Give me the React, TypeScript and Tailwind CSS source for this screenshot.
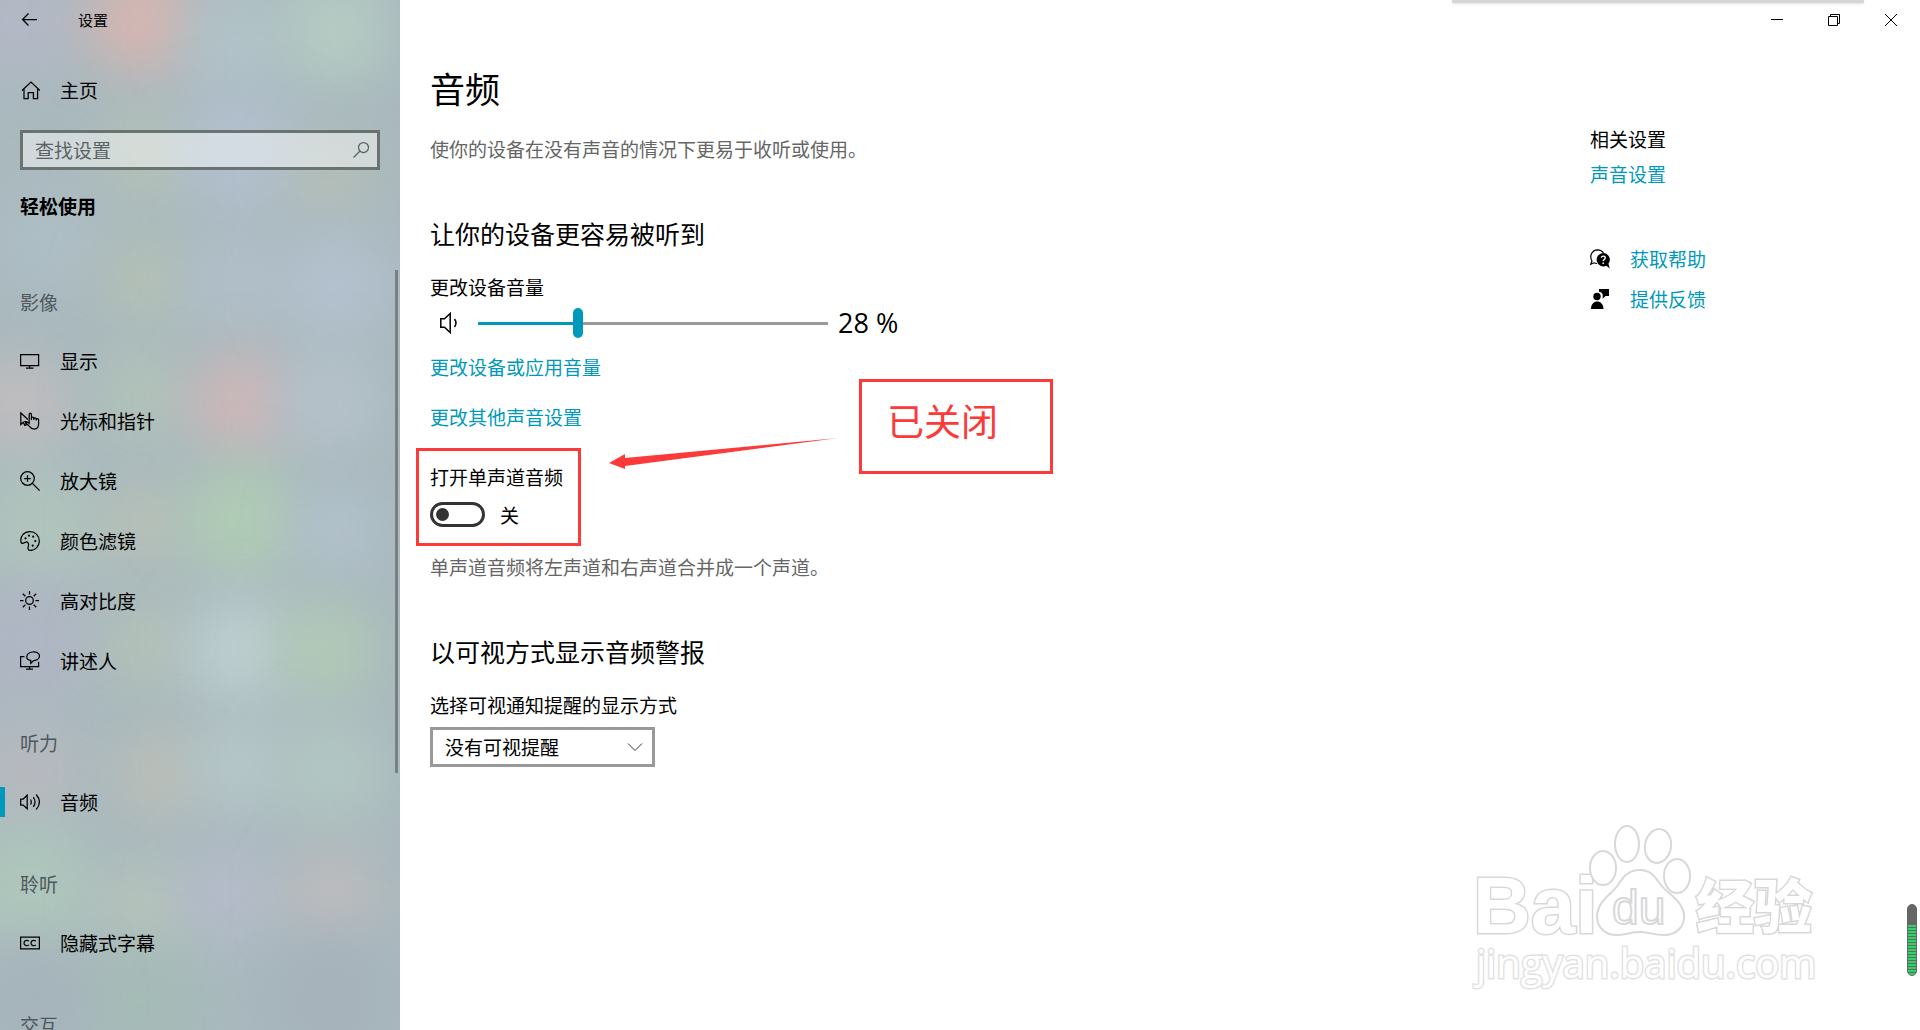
import { useState } from 'react'
import type { ReactNode } from 'react'

type Blob = { x: number; y: number; r: number; color: string }

type NavEntry = { id: string; label: string; icon: ReactNode }

type NavGroup = { title: string; items: NavEntry[] }

// soft spots of colour behind the navigation pane
const blobs: Blob[] = [
  { x: 20, y: 20, r: 60, color: '#b4b8c6' },
  { x: 142, y: 20, r: 54, color: '#dab5b0' },
  { x: 235, y: 40, r: 50, color: '#b3c4ca' },
  { x: 335, y: 30, r: 55, color: '#b6cdc3' },
  { x: 145, y: 155, r: 45, color: '#b6c2b4' },
  { x: 240, y: 150, r: 60, color: '#b2c1d0' },
  { x: 330, y: 175, r: 40, color: '#b7bfb5' },
  { x: 50, y: 240, r: 50, color: '#afbfc6' },
  { x: 145, y: 280, r: 40, color: '#b6c3b2' },
  { x: 235, y: 280, r: 50, color: '#b2c0ca' },
  { x: 335, y: 285, r: 55, color: '#b4c2d0' },
  { x: 20, y: 405, r: 50, color: '#c3bdbf' },
  { x: 140, y: 395, r: 45, color: '#b3c4b8' },
  { x: 240, y: 403, r: 50, color: '#d2b7b8' },
  { x: 330, y: 400, r: 50, color: '#b7c3cc' },
  { x: 40, y: 530, r: 60, color: '#b1c6bc' },
  { x: 142, y: 525, r: 42, color: '#b9c1b5' },
  { x: 240, y: 520, r: 58, color: '#b0cdb4' },
  { x: 338, y: 530, r: 42, color: '#b4c3cf' },
  { x: 30, y: 640, r: 65, color: '#b0b6c4' },
  { x: 145, y: 645, r: 42, color: '#b5c3b5' },
  { x: 240, y: 650, r: 52, color: '#bfd1d3' },
  { x: 325, y: 650, r: 52, color: '#b2cbb6' },
  { x: 30, y: 775, r: 50, color: '#b9b9bf' },
  { x: 158, y: 775, r: 44, color: '#bdbfb6' },
  { x: 240, y: 765, r: 48, color: '#b7c9ca' },
  { x: 330, y: 770, r: 55, color: '#b3c8c2' },
  { x: 30, y: 890, r: 65, color: '#afc8bb' },
  { x: 145, y: 910, r: 44, color: '#b9c6b9' },
  { x: 230, y: 895, r: 52, color: '#b5bcca' },
  { x: 332, y: 895, r: 45, color: '#c1bcbe' },
  { x: 140, y: 1000, r: 60, color: '#a5bcb6' },
  { x: 30, y: 1000, r: 60, color: '#a6b3bb' },
  { x: 330, y: 1000, r: 70, color: '#a6b2bb' },
]

function Icon({ children }: { children: ReactNode }) {
  return (
    <svg
      className="h-5 w-5 shrink-0"
      viewBox="0 0 20 20"
      fill="none"
      stroke="currentColor"
      strokeWidth="1.25"
      aria-hidden
    >
      {children}
    </svg>
  )
}

const groups: NavGroup[] = [
  {
    title: '影像',
    items: [
      {
        id: 'display',
        label: '显示',
        icon: (
          <Icon>
            <path d="M.6 3.6h18v11H.6zM9.6 14.6V17M6 17h7.5" />
          </Icon>
        ),
      },
      {
        id: 'cursor',
        label: '光标和指针',
        icon: (
          <Icon>
            <path d="M8 8.5.8 2v11.5l2.4-2.3 1.6 3.2 1.6-.8-1.4-3H7" />
            <path d="M9.2 10.5V3.2a1.1 1.1 0 0 1 2.2 0v4.6M11.4 9V7.4a1.1 1.1 0 0 1 2.4 0V9M13.8 9V8a1.1 1.1 0 0 1 2.4 0v1.5M16.2 9.5v-.7a1.1 1.1 0 0 1 2.4 0V13c0 3.2-2 5-4.4 5-2.4 0-3.7-1-4.7-2.6L6.3 12.5c-.6-1 .6-2 1.5-1.2l1.4 1.2v-3" />
          </Icon>
        ),
      },
      {
        id: 'magnifier',
        label: '放大镜',
        icon: (
          <Icon>
            <circle cx="7.5" cy="7.5" r="6.8" />
            <path d="m12.4 12.4 7.2 7.2M7.5 4.2v6.6M4.2 7.5h6.6" />
          </Icon>
        ),
      },
      {
        id: 'filter',
        label: '颜色滤镜',
        icon: (
          <Icon>
            <path d="M1 11C-.2 5 4.3.7 10 .7c5.3 0 9.3 4 9.3 9.3s-4 9.4-8.6 9.4c-3.7 0-2.7-2.9-2.2-4.9.5-2.1-.8-4-2.6-3.4-1.8.6-4.3 2.6-4.9-.1Z" />
            <g fill="currentColor" stroke="none">
              <circle cx="5.5" cy="7.3" r="1.1" />
              <circle cx="9" cy="4.7" r="1.1" />
              <circle cx="13.2" cy="5.7" r="1.1" />
              <circle cx="15.3" cy="10" r="1.1" />
              <circle cx="12.7" cy="14.7" r="1.1" />
            </g>
          </Icon>
        ),
      },
      {
        id: 'contrast',
        label: '高对比度',
        icon: (
          <Icon>
            <circle cx="9.5" cy="9.5" r="3.8" />
            <path d="M9.5 0v3.5M9.5 15.5V19M0 9.5h3.5M15.5 9.5H19M2.8 2.8l2.5 2.5M13.7 13.7l2.5 2.5M16.2 2.8l-2.5 2.5M5.3 13.7l-2.5 2.5" />
          </Icon>
        ),
      },
      {
        id: 'narrator',
        label: '讲述人',
        icon: (
          <Icon>
            <path d="M4.5 5.6H.6v10h18v-4.8M9.6 15.6V18M6 18h7" />
            <path d="M10.7 9.4C5 8.500 5.500 2 12.500 1c4.700-.5 7 1.600 7 4s-2.400 4.400-5.800 4.600l-3 2.700Z" />
          </Icon>
        ),
      },
    ],
  },
  {
    title: '听力',
    items: [
      {
        id: 'audio',
        label: '音频',
        icon: (
          <Icon>
            <path d="M.7 7v6h2.5l4 3.8V3.2L3.2 7ZM10.5 7.5c1 1.5 1 3.5 0 5M13.3 5.2c2.2 3 2.2 6.6 0 9.6M16.2 2.5c4 4.7 4 10.3 0 15" />
          </Icon>
        ),
      },
    ],
  },
  {
    title: '聆听',
    items: [
      {
        id: 'captions',
        label: '隐藏式字幕',
        icon: (
          <Icon>
            <path d="M.6 4.1h18.8v11.8H.6zM9 8c-2.5-1.3-5-.5-5 2s2.5 3.3 5 2M16 8c-2.5-1.3-5-.5-5 2s2.5 3.3 5 2" />
          </Icon>
        ),
      },
    ],
  },
  { title: '交互', items: [] },
]

const linkClass = 'block w-fit text-[19px] leading-6 text-[#0099bc] hover:text-gray-500'

function Sidebar() {
  const [active, setActive] = useState('audio')

  return (
    <aside className="relative h-full w-[400px] shrink-0 overflow-hidden bg-[#a9b9be]">
      <svg className="absolute inset-0 h-full w-full" aria-hidden>
        <defs>
          <filter id="soft" x="-100%" y="-100%" width="300%" height="300%">
            <feGaussianBlur stdDeviation="26" />
          </filter>
        </defs>
        <g opacity="0.9">
          {blobs.map((b) => (
            <circle key={`${b.x}-${b.y}`} cx={b.x} cy={b.y} r={b.r} fill={b.color} filter="url(#soft)" />
          ))}
        </g>
      </svg>

      <div className="relative">
        <div className="flex h-10 items-center gap-[38px] px-5">
          <button type="button" aria-label="返回">
            <svg className="h-5 w-5" viewBox="0 0 20 20" fill="none" stroke="currentColor" strokeWidth="1.25" aria-hidden>
              <path d="M17 9.5H2.5M8.5 3.500l-6 6 6 6" />
            </svg>
          </button>
          <span className="text-[15px]">设置</span>
        </div>

        <a href="#home" className="mt-5 flex h-[60px] items-center gap-5 px-5 text-[19px]">
          <svg className="h-5 w-5" viewBox="0 0 20 20" fill="none" stroke="currentColor" strokeWidth="1.25" aria-hidden>
            <path d="m2 10.5 9-8.500 9 8.500M4 9v9.500h4.200v-6h5.200v6h4.200V9" />
          </svg>
          主页
        </a>

        <div className="mx-5 mt-[10px] flex h-10 items-center border-3 border-[#6a7372] bg-white/45 pr-[6px] pl-3">
          <input
            type="text"
            aria-label="查找设置"
            placeholder="查找设置"
            className="min-w-0 flex-1 bg-transparent text-[19px] leading-6 outline-none placeholder:text-[#5b6264]"
          />
          <svg className="h-5 w-5 text-[#5b6264]" viewBox="0 0 20 20" fill="none" stroke="currentColor" strokeWidth="1.25" aria-hidden>
            <circle cx="12.5" cy="7.5" r="5" />
            <path d="m9 11-6.5 6.5" />
          </svg>
        </div>

        <h2 className="mt-6 px-5 text-[19px] leading-6 font-bold">轻松使用</h2>

        <nav className="mt-8" aria-label="轻松使用">
          {groups.map((group) => (
            <section key={group.title}>
              <h3 className="px-5 pt-10 pb-[17px] text-[19px] leading-6 text-[#4f585b]">{group.title}</h3>
              <ul>
                {group.items.map((item) => (
                  <li key={item.id} className="flex h-[60px] items-center">
                    <button
                      type="button"
                      className="flex h-[30px] w-full items-center text-[19px]"
                      aria-current={active === item.id ? 'page' : undefined}
                      onClick={() => setActive(item.id)}
                    >
                      <span className={`mr-[15px] h-full w-[5px] ${active === item.id ? 'bg-[#0099bc]' : ''}`} />
                      {item.icon}
                      <span className="ml-5">{item.label}</span>
                    </button>
                  </li>
                ))}
              </ul>
            </section>
          ))}
        </nav>
      </div>

      <div className="absolute top-[270px] right-[2px] h-[503px] w-[3px] bg-[#7b7f81]" />
    </aside>
  )
}

function WindowControls() {
  const button = 'flex h-10 w-[57px] items-center justify-center hover:bg-gray-200'

  return (
    <div className="flex justify-end pr-px">
      <button type="button" aria-label="最小化" className={button}>
        <svg className="h-3 w-3" viewBox="0 0 12 12" stroke="currentColor" aria-hidden>
          <path d="M0 5.5h12" />
        </svg>
      </button>
      <button type="button" aria-label="还原" className={button}>
        <svg className="h-3 w-3" viewBox="0 0 12 12" fill="none" stroke="currentColor" aria-hidden>
          <path d="M.5 2.5h9v9h-9zM2.5 2.5v-2h9v9h-2" />
        </svg>
      </button>
      <button type="button" aria-label="关闭" className={button}>
        <svg className="h-3 w-3" viewBox="0 0 12 12" stroke="currentColor" aria-hidden>
          <path d="m0 0 12 12M12 0 0 12" />
        </svg>
      </button>
    </div>
  )
}

function Volume() {
  const [volume, setVolume] = useState(28)

  return (
    <div>
      <label htmlFor="volume" className="block text-[19px] leading-6">
        更改设备音量
      </label>
      <div className="mt-2 flex h-8 items-center pl-2">
        <svg className="h-6 w-6" viewBox="0 0 24 24" fill="none" stroke="currentColor" strokeWidth="1.5" aria-hidden>
          <path d="M2.8 7.8v8.5h3.7l5.700 5.200V2.500L6.500 7.800ZM16.500 8c1.800 2.400 1.800 5.600 0 8" />
        </svg>
        <div className="relative ml-4 h-[30px] w-[350px]">
          <div className="flex h-full items-center">
            <div className="h-[3px] bg-[#0099bc]" style={{ width: `${volume}%` }} />
            <div className="h-[3px] flex-1 bg-[#999999]" />
          </div>
          <input
            id="volume"
            type="range"
            min={0}
            max={100}
            value={volume}
            onChange={(e) => setVolume(Number(e.target.value))}
            className="absolute inset-0 h-full w-full appearance-none bg-transparent [&::-webkit-slider-thumb]:h-[30px] [&::-webkit-slider-thumb]:w-[10px] [&::-webkit-slider-thumb]:appearance-none [&::-webkit-slider-thumb]:rounded-full [&::-webkit-slider-thumb]:bg-[#0099bc]"
          />
        </div>
        <span className="ml-[10px] font-['Open_Sans',sans-serif] text-[27px]">{volume} %</span>
      </div>
    </div>
  )
}

function MonoSwitch() {
  const [on, setOn] = useState(false)

  return (
    <div className="relative w-fit">
      <div id="mono-label" className="text-[19px] leading-6">
        打开单声道音频
      </div>
      <div className="mt-[13px] flex items-center gap-[15px] text-[19px] leading-6">
        <button
          type="button"
          role="switch"
          aria-checked={on}
          aria-labelledby="mono-label"
          onClick={() => setOn((v) => !v)}
          className={`flex h-[25px] w-[55px] items-center rounded-full border-3 px-[3px] ${on ? 'justify-end border-[#0099bc] bg-[#0099bc]' : 'border-[#333333]'}`}
        >
          <span className={`h-[13px] w-[13px] rounded-full ${on ? 'bg-white' : 'bg-[#333333]'}`} />
        </button>
        {on ? '开' : '关'}
      </div>

      <div className="pointer-events-none absolute -top-[17px] -left-[14px] h-[98px] w-[165px] border-3 border-[#fc3a3a]" />
      <svg className="pointer-events-none absolute -top-8 left-[178px] h-10 w-[232px]" viewBox="0 0 232 40" aria-hidden>
        <path d="M1 30 17 21v4L230 5 17 33v3Z" fill="#fc3a3a" />
      </svg>
      <div className="pointer-events-none absolute -top-[86px] left-[429px] h-[95px] w-[194px] border-3 border-[#fc3a3a] px-[25px] pt-[14px] text-[37px] leading-[48px] whitespace-nowrap text-[#fc3a3a]">
        已关闭
      </div>
    </div>
  )
}

function Related() {
  return (
    <aside className="w-[330px] shrink-0 pt-[87px]">
      <h2 className="text-[19px] leading-6">相关设置</h2>
      <a href="#sound" className={`${linkClass} mt-[11px]`}>
        声音设置
      </a>
      <div className="mt-[61px] flex flex-col gap-4">
        <div className="flex items-center gap-5">
          <svg className="h-5 w-5" viewBox="0 0 20 20" aria-hidden>
            <path
              d="M7 14.5c-1.500 0-2-.2-3-.7L.7 15.300l1.300-3.300C-1 7 2 1 7.500.8c3 0 5 1.500 6 3.400"
              fill="none"
              stroke="currentColor"
              strokeWidth="1.2"
            />
            <path d="M13.3 4a6.7 6.7 0 1 0 3 12.7l3.500 2.800-1.400-4.700A6.700 6.700 0 0 0 13.300 4Z" />
            <path
              d="M11.3 8.8c.2-2.400 4.200-2.200 3.900.2-.2 1.500-2 1.500-2 3.200M13.200 13.500V15"
              fill="none"
              stroke="#fff"
              strokeWidth="1.4"
            />
          </svg>
          <a href="#help" className={linkClass}>
            获取帮助
          </a>
        </div>
        <div className="flex items-center gap-5">
          <svg className="h-5 w-5" viewBox="0 0 20 20" aria-hidden>
            <circle cx="7" cy="7.5" r="3.7" />
            <path d="M1 20c0-10 12.5-10 12.5 0ZM9 0h10v7h-3.500l-2.800 2.700V5.500C12.300 3.800 10.500 3 9 2.700Z" />
          </svg>
          <a href="#feedback" className={linkClass}>
            提供反馈
          </a>
        </div>
      </div>
    </aside>
  )
}

function Watermark() {
  return (
    <svg
      className="pointer-events-none absolute right-[87px] bottom-[30px] h-[184px] w-[364px]"
      viewBox="0 0 364 184"
      fill="#fff"
      stroke="#d8d8d8"
      strokeWidth="2"
      aria-hidden
    >
      <g fontFamily="'Liberation Sans', sans-serif" fontWeight="bold" strokeWidth="3" paintOrder="stroke">
        <text x="4" y="117" fontSize="80">
          Bai
        </text>
        <text x="227" y="112" fontSize="58" fontWeight="900" fontFamily="'Noto Sans CJK SC', sans-serif">
          经验
        </text>
      </g>
      <ellipse cx="134" cy="52" rx="13" ry="17" />
      <ellipse cx="158" cy="28" rx="12" ry="18" />
      <ellipse cx="189" cy="30" rx="13" ry="17" transform="rotate(10 189 30)" />
      <ellipse cx="208" cy="60" rx="13" ry="17" />
      <path d="M171 54c-12 0-17 7-22 15-6 9-20 15-21 31 0 13 10 20 22 19 9-1 13-3 21-3s14 3 24 3c12 0 21-8 20-20-1-14-16-21-23-30-6-8-10-15-21-15Z" />
      <text x="143" y="108" fontSize="48" fontFamily="'Liberation Sans', sans-serif">
        du
      </text>
      <text x="7" y="162" fontSize="40" strokeWidth="3" stroke="#e2e2e2" paintOrder="stroke" fontFamily="'Open Sans', sans-serif">
        jingyan.baidu.com
      </text>
    </svg>
  )
}

function Battery() {
  return (
    <div className="absolute right-[3px] bottom-[54px] flex h-[72px] w-[10px] flex-col justify-end overflow-hidden rounded-full border border-[#666666] bg-[#666666]">
      <div className="h-[50px] bg-[repeating-linear-gradient(#2bd566_0_2px,#666666_2px_3px)]" />
    </div>
  )
}

export default function App() {
  return (
    <div className="relative flex h-screen overflow-hidden bg-white font-['Noto_Sans_CJK_SC',sans-serif] text-black">
      <Sidebar />

      <div className="flex min-w-0 flex-1 flex-col">
        <WindowControls />
        <div className="flex flex-1 justify-between pl-[30px]">
          <main className="pt-6">
            <h1 className="text-[35px] leading-[48px]">音频</h1>
            <p className="mt-[25px] text-[19px] leading-6 text-[#666666]">
              使你的设备在没有声音的情况下更易于收听或使用。
            </p>

            <h2 className="mt-14 mb-[26px] text-[25px] leading-8">让你的设备更容易被听到</h2>
            <Volume />
            <a href="#app-volume" className={`${linkClass} mt-4`}>
              更改设备或应用音量
            </a>
            <a href="#other-sound" className={`${linkClass} mt-[26px] mb-9`}>
              更改其他声音设置
            </a>
            <MonoSwitch />
            <p className="mt-7 text-[19px] leading-6 text-[#666666]">单声道音频将左声道和右声道合并成一个声道。</p>

            <h2 className="mt-14 mb-[26px] text-[25px] leading-8">以可视方式显示音频警报</h2>
            <label htmlFor="alert" className="block text-[19px] leading-6">
              选择可视通知提醒的显示方式
            </label>
            <div className="relative mt-[10px] w-[225px]">
              <select
                id="alert"
                className="h-10 w-full appearance-none border-3 border-[#999999] bg-white pl-3 text-[19px]"
              >
                <option>没有可视提醒</option>
                <option>使活动窗口的标题栏闪烁</option>
                <option>使活动窗口闪烁</option>
                <option>使整个屏幕闪烁</option>
              </select>
              <svg
                className="pointer-events-none absolute top-3 right-3 h-4 w-4"
                viewBox="0 0 16 16"
                fill="none"
                stroke="#333333"
                aria-hidden
              >
                <path d="m1 4.5 7 7 7-7" />
              </svg>
            </div>
          </main>
          <Related />
        </div>
      </div>

      <div className="absolute top-0 right-[56px] h-[3px] w-[412px] bg-[#d6d6d6] shadow-sm" />
      <Watermark />
      <Battery />
    </div>
  )
}
